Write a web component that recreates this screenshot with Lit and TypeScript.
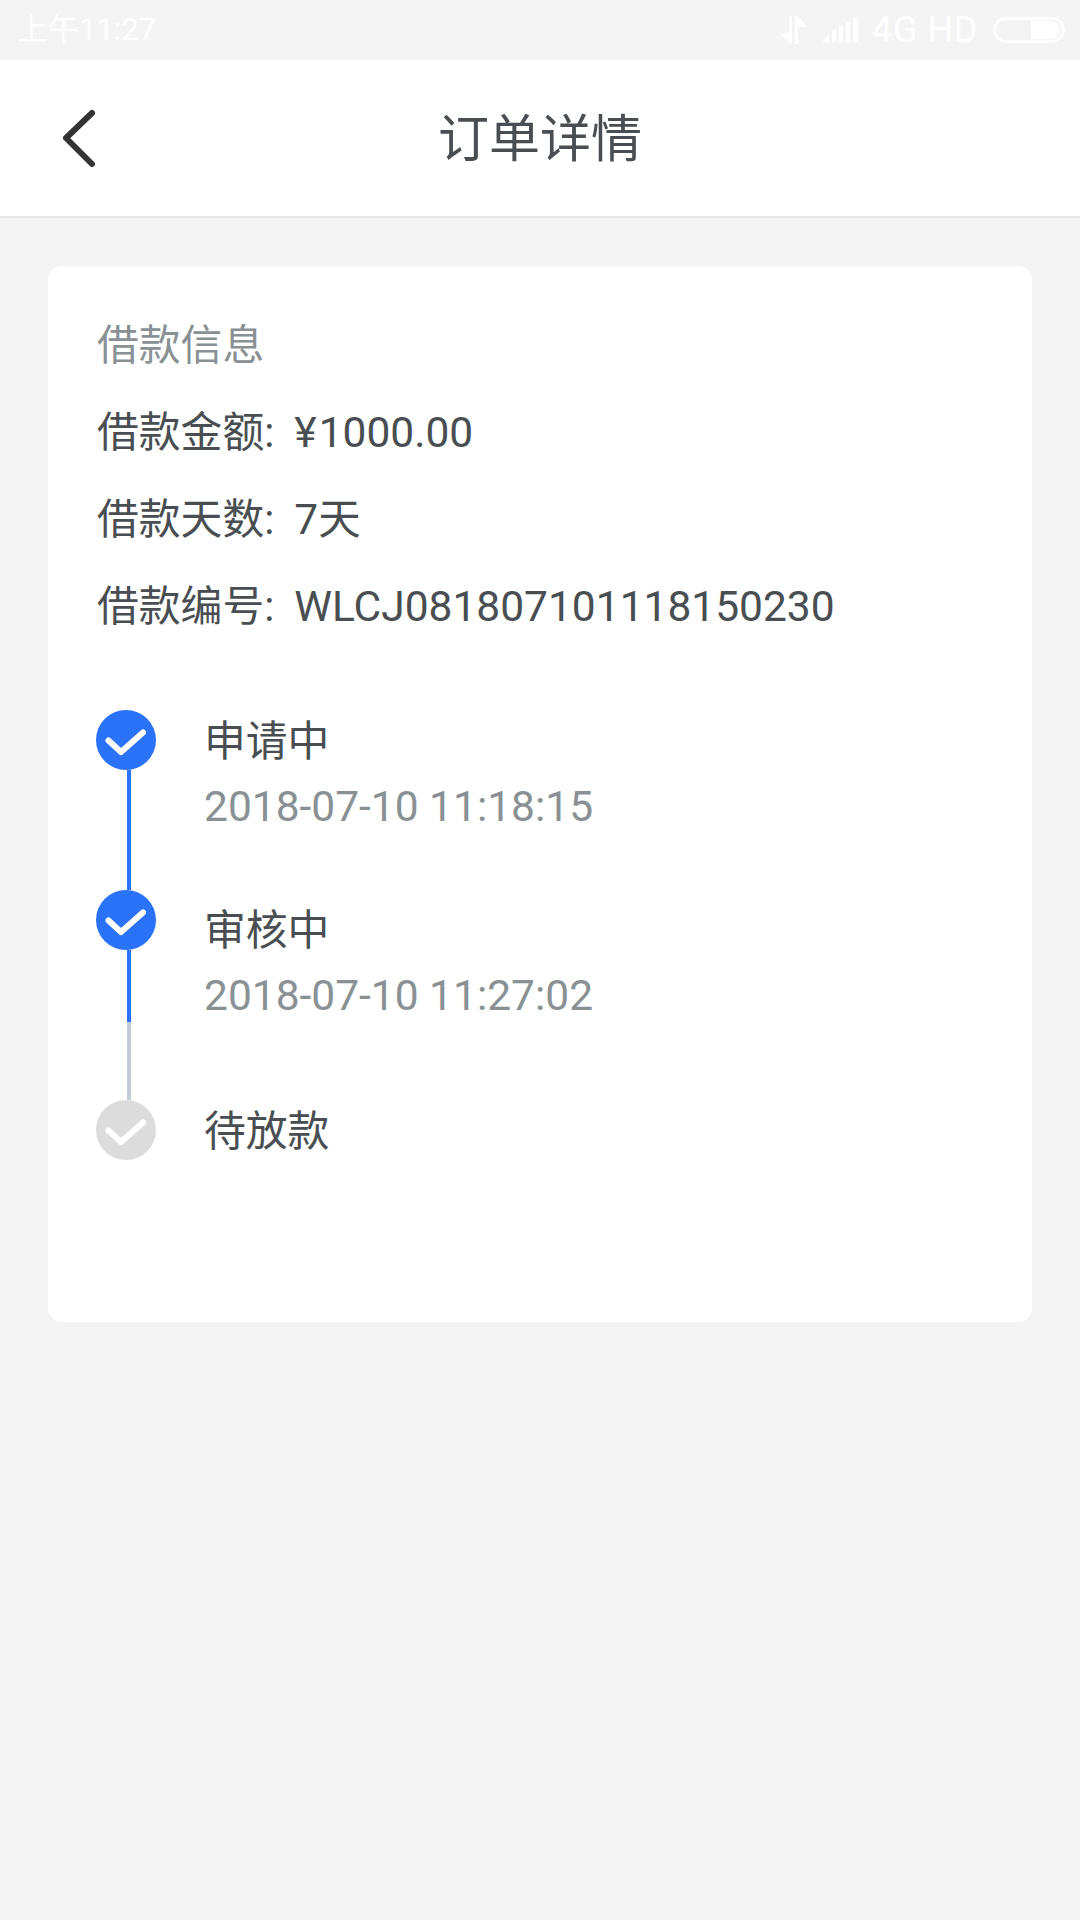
import { LitElement, html, css, svg } from "lit";
import { customElement } from "lit/decorators.js";

const check = svg`<path d="M12.500 30.500 L25 42 L47 22.500" fill="none" stroke="#fff" stroke-width="6" stroke-linecap="round" stroke-linejoin="round"/>`;

@customElement("app-root")
export class AppRoot extends LitElement {
  static styles = css`
    :host {
      display: block;
      width: 1080px;
      height: 1920px;
      background: #f4f4f4;
      font-family: Roboto, "Noto Sans CJK SC", sans-serif;
      color: #484e51;
      overflow: hidden;
    }
    .status {
      height: 60px;
      display: flex;
      align-items: center;
      padding: 0 15px 0 17px;
      color: #fff;
      box-sizing: border-box;
    }
    .time { flex: 1; font-size: 31px; line-height: 60px; height: 60px; }
    .status svg { display: block; }
    .arrows { margin-right: 15px; }
    .signal { margin-right: 13px; }
    .net { margin-right: 15px; font-size: 36px; letter-spacing: 0.6px; }
    .nav {
      height: 158px;
      box-sizing: border-box;
      background: #fff;
      border-bottom: 2px solid #e8e8e8;
      display: flex;
      align-items: center;
      justify-content: center;
      position: relative;
    }
    .back { position: absolute; left: 60px; top: 48px; }
    .title { font-size: 51px; color: #484e51; line-height: 1; padding-top: 2px; }
    .card {
      margin: 48px 48px 0;
      height: 1056px;
      background: #fff;
      border-radius: 14px;
      box-sizing: border-box;
      padding: 36px 0 0 49px;
    }
    .line {
      font-size: 41.800px;
      height: 87px;
      line-height: 87px;
      white-space: nowrap;
    }
    .head { color: #899194; }
    .val { margin-left: 20px; font-size: 42.500px; }
    .yen { margin-right: 2px; }
    .steps { margin-top: 60px; }
    .step { display: flex; }
    .tall { height: 180px; }
    .taller { height: 210px; }
    .marker {
      width: 60px;
      margin-left: -1px;
      display: flex;
      flex-direction: column;
      flex: none;
    }
    .dot { width: 60px; height: 60px; flex: none; display: block; }
    .seg { width: 4px; margin-left: 31px; background: #2a72f8; flex: none; }
    .seg.fill { flex: 1; }
    .seg.short { height: 72px; }
    .seg.grey { background: #c1ccd6; flex: 1; }
    .body { margin-left: 48px; }
    .offset { padding-top: 9px; }
    .name { font-size: 41.800px; line-height: 63px; height: 63px; }
    .date { font-size: 42.500px; color: #899194; line-height: 66px; margin-top: 1px; }
  `;

  private dot(color: string) {
    return html`<svg class="dot" viewBox="0 0 60 60"><circle cx="30" cy="30" r="30" fill=${color}></circle>${check}</svg>`;
  }

  render() {
    return html`
      <div class="status">
        <span class="time">上午11:27</span>
        <svg class="arrows" width="27" height="28" viewBox="0 0 27 28" fill="#fff">
          <path d="M9 0h3v27H9L0 17h9z"/>
          <path d="M15 0h3l9 11h-9v17h-3z"/>
        </svg>
        <svg class="signal" width="37" height="26" viewBox="0 0 37 26" fill="#fff">
          <path d="M0 25 L7 18 V25z M10 15 L14 11 V25 H10z M17 9 h4 V25 h-4z M24 5 h4 V25 h-4z M31 1 h5 V25 h-5z"/>
        </svg>
        <span class="net">4G HD</span>
        <svg width="72" height="26" viewBox="0 0 72 26">
          <rect x="1.500" y="1.500" width="69" height="23" rx="11.500" fill="none" stroke="#fff" stroke-width="2.500"/>
          <path d="M38 4 H58 a9 9 0 0 1 9 9 a9 9 0 0 1 -9 9 H38z" fill="#fff"/>
        </svg>
      </div>
      <div class="nav">
        <svg class="back" width="40" height="64" viewBox="0 0 40 64">
          <path d="M32 5 L6 30 L32 56" fill="none" stroke="#333" stroke-width="6" stroke-linecap="round" stroke-linejoin="round"/>
        </svg>
        <span class="title">订单详情</span>
      </div>
      <div class="card">
        <div class="line head">借款信息</div>
        <div class="line">借款金额:<span class="val"><span class="yen">¥</span>1000.00</span></div>
        <div class="line">借款天数:<span class="val">7天</span></div>
        <div class="line">借款编号:<span class="val">WLCJ081807101118150230</span></div>
        <div class="steps">
          <div class="step tall">
            <div class="marker">${this.dot("#2a72f8")}<div class="seg fill"></div></div>
            <div class="body">
              <div class="name">申请中</div>
              <div class="date">2018-07-10 11:18:15</div>
            </div>
          </div>
          <div class="step taller">
            <div class="marker">${this.dot("#2a72f8")}<div class="seg short"></div><div class="seg grey"></div></div>
            <div class="body offset">
              <div class="name">审核中</div>
              <div class="date">2018-07-10 11:27:02</div>
            </div>
          </div>
          <div class="step">
            <div class="marker">${this.dot("#dcdcdc")}</div>
            <div class="body"><div class="name">待放款</div></div>
          </div>
        </div>
      </div>
    `;
  }
}
